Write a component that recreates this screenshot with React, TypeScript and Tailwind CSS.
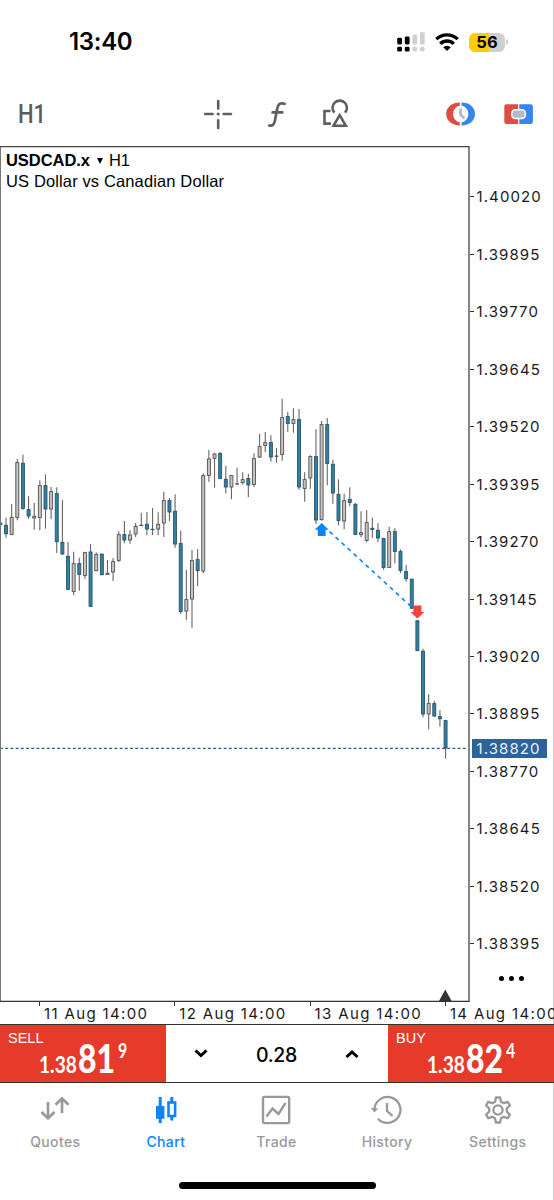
import type { ReactNode } from 'react'

type Candle = [kind: 'u' | 'd', high: number, top: number, bottom: number, low: number]

const STEP = 5.635
const CHART_TOP = 146

const candles: Candle[] = [
  ['d', 522, 522.7, 524.7, 525],
  ['d', 517.7, 525, 534, 537.7],
  ['u', 504, 517, 534.7, 535.3],
  ['u', 459, 462.3, 517.7, 520.3],
  ['d', 454.7, 463, 508.7, 509.7],
  ['d', 496.3, 509.3, 516.3, 518.7],
  ['u', 503, 516, 518.3, 529.7],
  ['u', 480.3, 485.3, 517.7, 530.3],
  ['d', 474.3, 485.3, 509.3, 528.7],
  ['u', 487, 491.3, 509.3, 519.3],
  ['d', 487.3, 493.3, 542, 553],
  ['d', 500, 542, 554.3, 554.7],
  ['d', 542, 556, 589.7, 590],
  ['u', 551.7, 563.3, 591.7, 595.3],
  ['d', 557.7, 563.3, 574.7, 590.7],
  ['u', 551.7, 552.3, 575.7, 579],
  ['d', 544, 551.7, 606.7, 606.7],
  ['u', 552.3, 554.3, 571, 571.3],
  ['d', 553, 554, 575, 575.3],
  ['u', 560, 573, 574.7, 575],
  ['u', 558, 561.3, 572.3, 581],
  ['u', 531.3, 534.3, 560.7, 562],
  ['d', 521, 534.3, 540.3, 543.3],
  ['u', 530.3, 534.7, 540.3, 543.7],
  ['u', 523, 526, 534.3, 537],
  ['d', 512.7, 525, 525.8, 526],
  ['d', 512, 524, 529.3, 535.3],
  ['d', 508, 529, 529.5, 535],
  ['u', 512.3, 524, 529.3, 535.3],
  ['u', 491.7, 500.3, 523.3, 537],
  ['d', 498, 500.3, 512.3, 521],
  ['d', 494.3, 511, 544.3, 547.7],
  ['d', 530.7, 543.3, 611.7, 614],
  ['u', 569.7, 599.3, 611.3, 619.7],
  ['u', 550, 560.3, 599.3, 627.7],
  ['d', 549, 559.3, 571, 586],
  ['u', 473.3, 475.3, 571.3, 573.3],
  ['u', 450, 458.7, 475.7, 481.7],
  ['u', 453, 453.7, 458.7, 487.7],
  ['d', 452, 453.3, 478.7, 479.3],
  ['d', 466, 479, 487.3, 493.3],
  ['u', 475, 475.3, 487.3, 499.3],
  ['u', 467.7, 483.5, 484.3, 484.7],
  ['u', 472.3, 479.3, 482.7, 484.7],
  ['d', 473.7, 478.3, 485.3, 497],
  ['u', 453.3, 458.3, 484.7, 487.3],
  ['u', 434, 446.3, 457.3, 458],
  ['u', 432, 442.3, 445.7, 452],
  ['d', 435.3, 442.3, 457.3, 461.7],
  ['u', 448, 455.7, 456.7, 462.7],
  ['u', 398.7, 417.3, 454.7, 460.7],
  ['d', 412, 416.3, 423.7, 431.7],
  ['u', 408.3, 419.3, 423.7, 432.7],
  ['d', 409, 419.3, 487.3, 489.7],
  ['u', 472.3, 479.3, 488.7, 501.7],
  ['u', 455.3, 456.3, 478.3, 488.7],
  ['d', 429.3, 456.3, 520.3, 524],
  ['u', 421, 424.3, 519.7, 520.7],
  ['d', 418, 424.3, 463.7, 485.3],
  ['d', 459.7, 464, 493.3, 503.7],
  ['d', 479.3, 494, 520.7, 525.3],
  ['u', 493.7, 500.3, 521.3, 529.3],
  ['d', 487.3, 499, 502.7, 506.3],
  ['d', 503, 504, 534.7, 535.3],
  ['u', 511.3, 532.3, 534.7, 537.3],
  ['u', 510.3, 522.3, 540.7, 542.3],
  ['d', 517.7, 528, 529.7, 538],
  ['d', 523.3, 530, 538.3, 542],
  ['d', 537.7, 538.3, 567.7, 569.7],
  ['u', 526.7, 531.3, 567.7, 568],
  ['d', 528.3, 531.3, 551.7, 563.3],
  ['d', 549.3, 551.3, 570.7, 573],
  ['d', 565, 571.3, 579, 581.7],
  ['d', 578.3, 579, 608.5, 609],
  ['d', 620, 620.5, 651, 651],
  ['d', 648.7, 651, 714.3, 717.3],
  ['u', 694.3, 703.3, 714.3, 729.3],
  ['d', 700.7, 703.3, 716.3, 716.7],
  ['d', 710.3, 716.3, 719, 726.7],
  ['d', 719.7, 720.3, 748.3, 758.7],
]

const prices = [
  '1.40020', '1.39895', '1.39770', '1.39645', '1.39520', '1.39395', '1.39270',
  '1.39145', '1.39020', '1.38895', '1.38770', '1.38645', '1.38520', '1.38395',
]

const dates = ['11 Aug 14:00', '12 Aug 14:00', '13 Aug 14:00', '14 Aug 14:00']

const StatusBar = () => (
  <div className="flex h-[84px] items-center justify-between pl-[69px] pr-[46px]">
    <span className="text-[24px] font-semibold leading-none tracking-[-0.3px]">13:40</span>
    <div className="flex items-center">
      <svg width="28" height="20" viewBox="0 0 28 20">
        <g>
          <rect x="0.2" y="5.8" width="4.8" height="6.6" rx="1.4" />
          <rect x="7.8" y="4.4" width="4.8" height="8" rx="1.4" />
          <rect x="0.2" y="14.8" width="4.8" height="4.8" rx="1.4" />
          <rect x="7.8" y="14.8" width="4.8" height="4.8" rx="1.4" />
        </g>
        <g fill="#d0d0d0">
          <rect x="15.4" y="2.4" width="4.8" height="10" rx="1.4" />
          <rect x="22.9" y="0.2" width="4.8" height="12.2" rx="1.4" />
          <rect x="15.4" y="14.8" width="4.8" height="4.8" rx="2" />
          <rect x="22.9" y="14.8" width="4.8" height="4.8" rx="2" />
        </g>
      </svg>
      <svg className="ml-[10px]" width="24" height="20" viewBox="0 0 24 20" fill="none" stroke="#000" strokeWidth="3.3">
        <path d="M1.3 7.2a15.2 15.2 0 0 1 21.4 0" />
        <path d="M5.3 11.8a9.4 9.4 0 0 1 13.4 0" />
        <path d="M12 19l-3.8-3.7a5.3 5.3 0 0 1 7.6 0z" fill="#000" stroke="none" />
      </svg>
      <div className="ml-[10px] flex h-[19px] w-[36px] items-center justify-center rounded-[6px] bg-linear-to-r from-[#fc0] from-55% to-[#cfcfd1] to-55% text-[16.5px] font-bold leading-none">
        56
      </div>
      <div className="ml-px h-[6px] w-[2px] rounded-r-full bg-[#cfcfd1]" />
    </div>
  </div>
)

const Toolbar = () => (
  <div className="flex h-[62px] items-start pt-[12px]">
    <span className="ml-[18px] mt-[6px] w-[185px] origin-left scale-x-[0.88] font-[Roboto,sans-serif] text-[25px] font-medium leading-none text-[#5c5c5c]">H1</span>
    <svg width="30" height="36" viewBox="203 96 30 36" stroke="#5f5f5f" strokeWidth="2.6" strokeLinecap="round">
      <path d="M205.2 114h7.4M223.6 114h7.4M218.2 101v7.6M218.2 120.4v7.6" />
      <circle cx="218.2" cy="114" r="1.6" fill="#5f5f5f" stroke="none" />
    </svg>
    <svg className="ml-[33px]" width="22" height="36" viewBox="266 96 22 36" fill="none" stroke="#5f5f5f" strokeWidth="2.7" strokeLinecap="round">
      <path d="M284.6 103.8c-4.6-1.4-6.4.4-7.2 4.2l-2.6 13c-.7 3.7-2.4 5.2-5.6 4.5M272.6 112.4h9.8" />
    </svg>
    <svg className="ml-[33px]" width="30" height="36" viewBox="321 96 30 36" fill="none" stroke="#5f5f5f" strokeWidth="2.6">
      <path d="M330.5 111h-6v12.6h6.4" />
      <path d="M334.4 112.7a7.2 7.2 0 1 1 10.6 0" />
      <path d="M339.7 115.2l-6.2 10.6h12.4z" />
    </svg>
    <svg className="ml-[94px]" width="30" height="36" viewBox="445 96 30 36">
      <path d="M459.9 102.6v2.9a8.7 8.7 0 0 0 0 17v2.9c-8 0-13.7-4.8-13.7-11.4s5.7-11.4 13.7-11.4z" fill="#dc4e41" />
      <path d="M461.5 102.6v2.9a8.7 8.7 0 0 1 0 17v2.9c8 0 13.5-4.8 13.5-11.4s-5.5-11.4-13.5-11.4z" fill="#3585ee" />
      <path d="M460.6 108.5v6.3l3.9 3.6" fill="none" stroke="#b4bac8" strokeWidth="2.8" strokeLinejoin="round" />
    </svg>
    <svg className="ml-[28px]" width="32" height="36" viewBox="503 96 32 36">
      <path d="M518.1 104.3v19.7H506.5a2.2 2.2 0 0 1-2.2-2.2v-15.3a2.2 2.2 0 0 1 2.2-2.2z" fill="#dc4e41" />
      <path d="M519.3 104.3v19.7h11.4a2.2 2.2 0 0 0 2.2-2.2v-15.3a2.2 2.2 0 0 0-2.2-2.2z" fill="#3585ee" />
      <rect x="511.8" y="109.8" width="13.6" height="8.8" rx="3.5" fill="#b4bac8" stroke="#fff" strokeWidth="1.5" />
    </svg>
  </div>
)

const CandleChart = () => (
  <svg className="block" width="470" height="856" viewBox={`0 ${CHART_TOP} 470 856`}>
    {candles.map(([kind, high, top, bottom, low], i) => {
      const x = 0.4 + STEP * i
      return (
        <g key={i}>
          <path d={`M${x} ${high}V${low}`} stroke="#6a6462" strokeWidth="1.1" />
          <rect
            x={x - 1.5}
            y={top + 0.3}
            width="3"
            height={Math.max(bottom - top - 0.6, 0.3)}
            fill={kind === 'u' ? '#c4c4c4' : '#2f81a8'}
            stroke={kind === 'u' ? '#555150' : '#2b5468'}
            strokeWidth="0.9"
          />
        </g>
      )
    })}
    <path d="M0 748.4H468" stroke="#2c5a8c" strokeWidth="1.4" strokeDasharray="2.9 2.3" />
    <path d="M329.5 531.5L417 612" stroke="#0a84ff" strokeWidth="1.6" strokeDasharray="4.2 4" />
    <path d="M321.7 523l7 6.8h-3.1v6.2h-7.8v-6.2h-3.1z" fill="#0a84ff" />
    <path d="M417.4 618.6l-7-6.6h3v-6.6h8v6.6h3z" fill="#f44336" />
    <path d="M445.3 989.5l6.3 11.5h-12.6z" fill="#333" />
    <path d="M0.5 1001.5V146.5" stroke="#777" />
    <path d="M0 146.5H469V1001.5" fill="none" stroke="#444" strokeWidth="1.3" />
    <path d="M0 1001.3H469.5" stroke="#333" strokeWidth="1.3" />
  </svg>
)

const PriceAxis = () => (
  <div className="relative h-[856px] flex-1 pt-[22px]">
    {prices.map((price) => (
      <div key={price} className="flex h-[57.47px] items-center">
        <span className="h-px w-[4px] bg-[#333]" />
        <span className="ml-[2.5px] text-[15px] leading-none tracking-[1.1px] text-[#1a1a1a]">{price}</span>
      </div>
    ))}
    <div className="absolute left-[2px] top-[593px] flex h-[19px] w-[75px] items-center bg-[#2f6299] pl-[4.5px] text-[15px] leading-none tracking-[1.1px] text-[#e4f0ff]">
      1.38820
    </div>
    <div className="absolute left-[29px] top-[830px] flex gap-[5px]">
      <i className="size-[5px] rounded-full bg-black" />
      <i className="size-[5px] rounded-full bg-black" />
      <i className="size-[5px] rounded-full bg-black" />
    </div>
  </div>
)

const TimeAxis = () => (
  <div className="flex h-[22px] overflow-hidden pl-[39px]">
    {dates.map((date) => (
      <div key={date} className="flex w-[135.3px] shrink-0">
        <span className="h-[4px] w-px bg-[#333]" />
        <span className="ml-[4px] mt-[3.5px] whitespace-nowrap text-[15px] leading-none tracking-[1.35px] text-[#1a1a1a]">{date}</span>
      </div>
    ))}
  </div>
)

const PriceButton = ({ label, base, big, pip }: { label: string; base: string; big: string; pip: string }) => (
  <button className="relative flex h-full w-[166px] items-start bg-[#e63a2a] pl-[38.5px] text-left font-[Lato,sans-serif] text-white">
    <span className="absolute left-[8px] top-[6px] font-['Liberation_Sans',sans-serif] text-[14.5px] leading-none">{label}</span>
    <span className="mt-[29px] w-[39px] origin-left scale-x-[0.87] text-[22px] font-bold leading-none">{base}</span>
    <span className="mt-[13px] w-[40px] origin-left scale-x-[0.8] text-[40px] font-black leading-none">{big}</span>
    <span className="mt-[15px] origin-left scale-x-[0.78] text-[20.5px] font-bold leading-none">{pip}</span>
  </button>
)

const TradeBar = () => (
  <div className="flex h-[59px] border-y border-[#333]">
    <PriceButton label="SELL" base="1.38" big="81" pip="9" />
    <div className="flex flex-1 items-center justify-between pl-[28px] pr-[29px]">
      <svg width="14" height="10" viewBox="0 0 14 10" fill="none" stroke="#000" strokeWidth="3">
        <path d="M1.5 1.5l5.5 5 5.5-5" />
      </svg>
      <span className="mt-[4px] text-[19.5px] font-medium leading-none tracking-[-0.3px]">0.28</span>
      <svg width="14" height="10" viewBox="0 0 14 10" fill="none" stroke="#000" strokeWidth="3">
        <path d="M1.5 8l5.5-5 5.5 5" />
      </svg>
    </div>
    <PriceButton label="BUY" base="1.38" big="82" pip="4" />
  </div>
)

const Tab = ({ label, active, children }: { label: string; active?: boolean; children: ReactNode }) => (
  <div className={`flex w-[110.6px] flex-col items-center ${active ? 'text-[#0a84ff]' : 'text-[#999]'}`}>
    <svg width="32" height="32" viewBox="0 0 32 32" fill="none" stroke="currentColor" strokeWidth="2.3">
      {children}
    </svg>
    <span className="mt-[9px] text-[14px] font-medium leading-none tracking-[0.35px]">{label}</span>
  </div>
)

const TabBar = () => (
  <div className="flex pt-[11px]">
    <Tab label="Quotes">
      <path d="M9 8v16.5M2.5 18L9 24.3l6.5-6.3" strokeWidth="2.7" />
      <path d="M23 19V4.5M16.5 10.8L23 4.5l6.5 6.3" strokeWidth="2.7" />
    </Tab>
    <Tab label="Chart" active>
      <path d="M10.2 3v26M21.8 3v5.5M21.8 22v4.5" strokeWidth="3" />
      <rect x="6" y="12" width="8.4" height="12.8" fill="currentColor" stroke="none" />
      <rect x="18.5" y="8.5" width="6.6" height="13.5" strokeWidth="2.6" />
    </Tab>
    <Tab label="Trade">
      <rect x="3" y="2.9" width="26.2" height="26.2" rx="1.5" strokeWidth="2.4" />
      <path d="M6.5 22.5l6-8 6 5.5 7-11" strokeWidth="2.4" />
    </Tab>
    <Tab label="History">
      <path d="M3.5 15a13 13 0 1 1 3.4 9.7" />
      <path d="M-0.2 14l7.4.5-3.7 4z" fill="currentColor" stroke="none" />
      <path d="M16 9v8l5.5 4.8" />
    </Tab>
    <Tab label="Settings">
      <circle cx="16" cy="16" r="4.6" />
      <path d="M13.9 3.5h4.2l.9 4.2 2.7 1.5 4.1-1.3 2.1 3.6-3.1 2.9v3.2l3.1 2.9-2.1 3.6-4.1-1.3-2.7 1.5-.9 4.2h-4.2l-.9-4.2-2.7-1.5-4.1 1.3-2.1-3.6 3.1-2.9v-3.2l-3.1-2.9 2.1-3.6 4.1 1.3 2.7-1.5z" strokeLinejoin="round" />
    </Tab>
  </div>
)

export default function App() {
  return (
    <div className="flex h-[1200px] w-[554px] flex-col overflow-hidden bg-white font-[Inter,sans-serif] text-black shadow-[inset_-1px_0_0_#d0d0d0]">
      <StatusBar />
      <Toolbar />
      <div className="relative flex">
        <CandleChart />
        <PriceAxis />
        <div className="absolute left-[6px] top-[4px] font-['Liberation_Sans',sans-serif] text-[16.5px] leading-[21px]">
          <div className="flex items-center">
            <b className="tracking-[-0.05px]">USDCAD.x</b>
            <span className="ml-[7px] border-x-[3.5px] border-t-[6px] border-x-transparent border-t-black" />
            <span className="ml-[6px]">H1</span>
          </div>
          <div className="tracking-[0.13px]">US Dollar vs Canadian Dollar</div>
        </div>
      </div>
      <TimeAxis />
      <TradeBar />
      <TabBar />
      <div className="mx-auto mb-[11px] mt-auto h-[7px] w-[197px] rounded-full bg-black" />
    </div>
  )
}
